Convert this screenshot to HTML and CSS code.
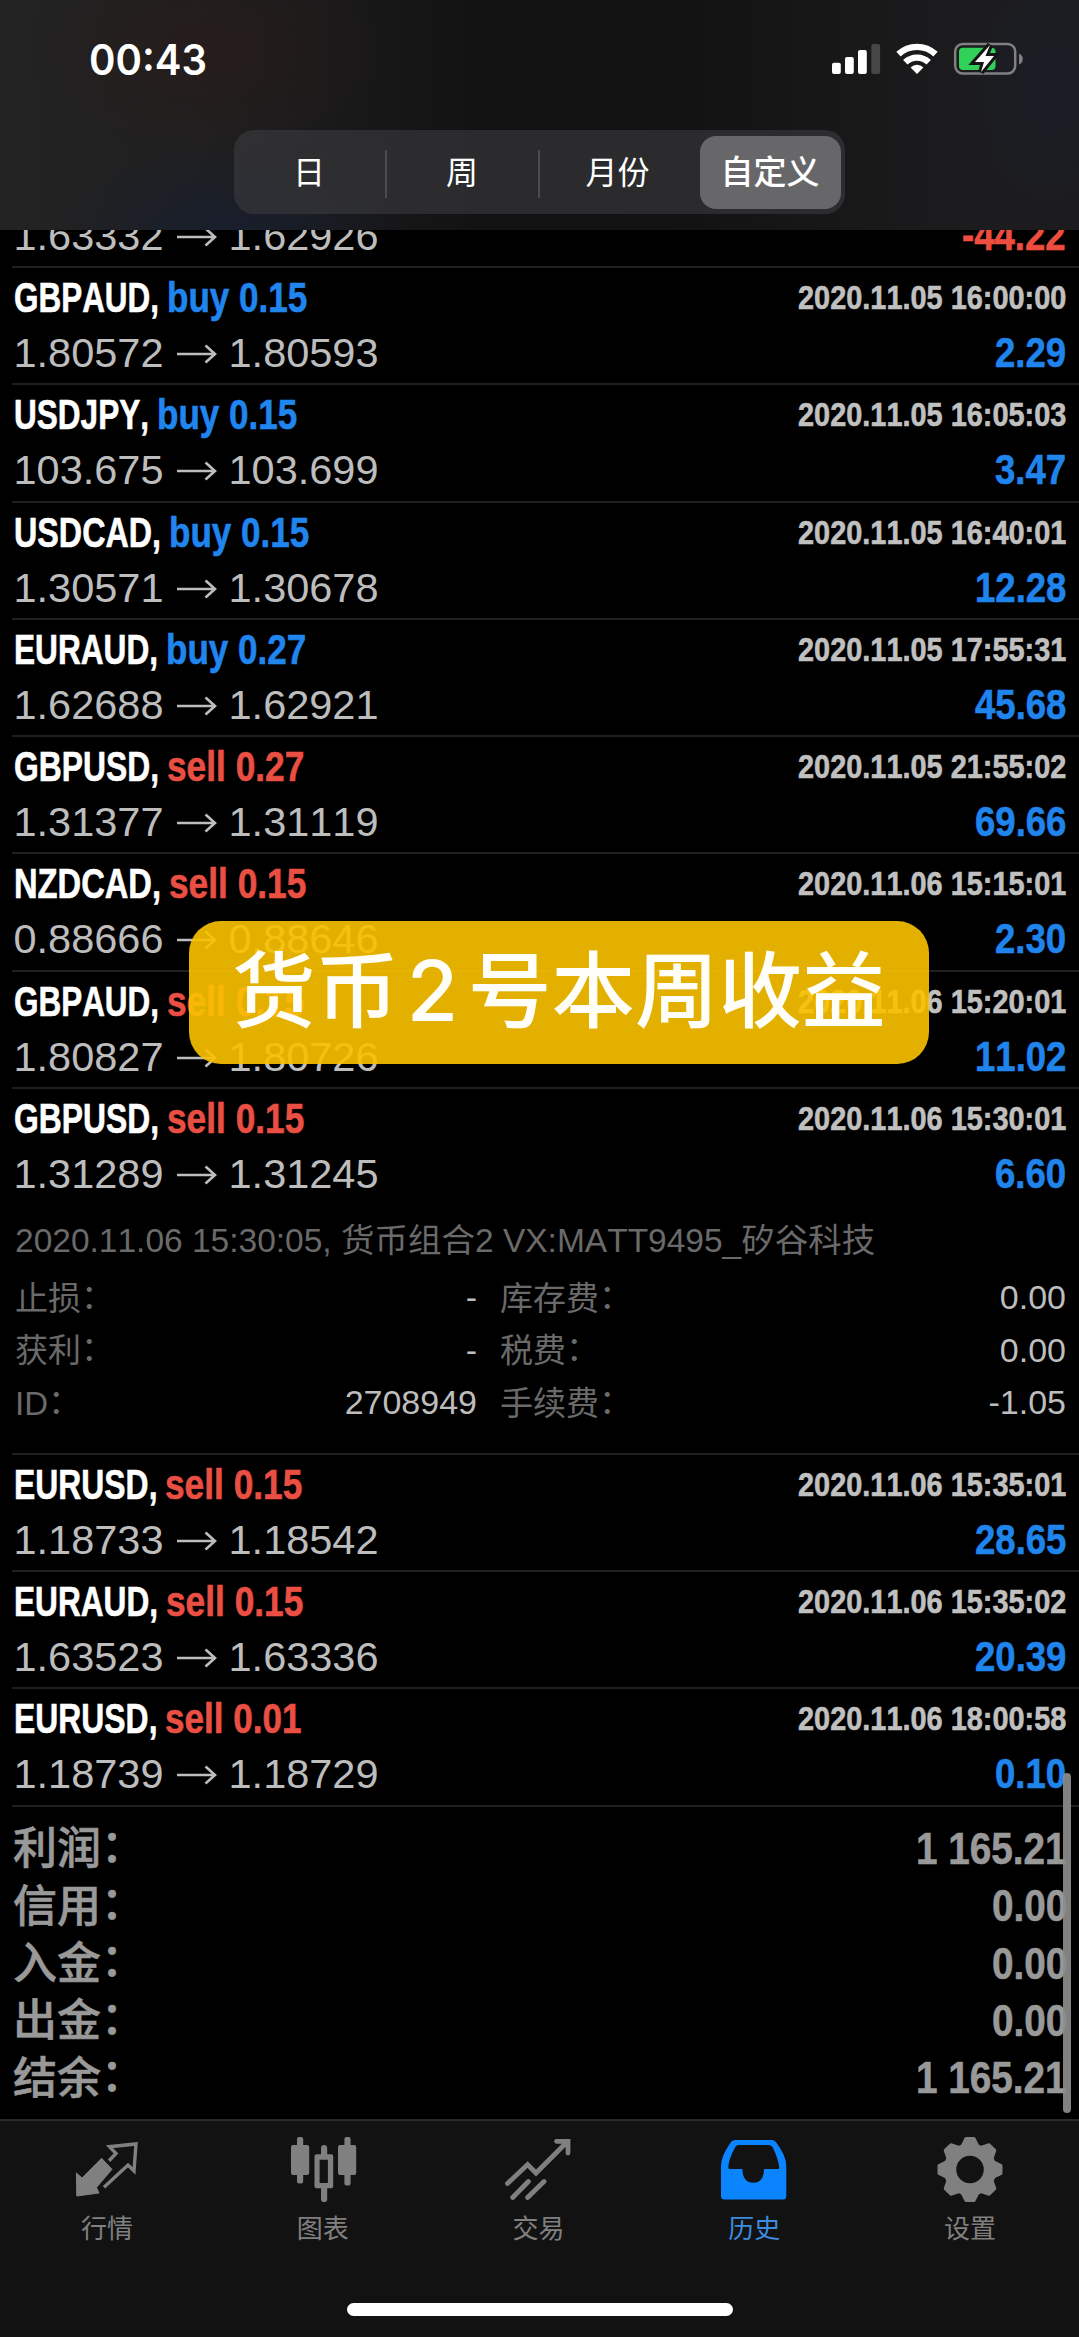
FILE: index.html
```html
<!DOCTYPE html>
<html lang="zh-CN">
<head>
<meta charset="utf-8">
<title>历史</title>
<link rel="stylesheet" href="styles.css">
</head>
<body>
<div class="screen">
  <header class="top">
    <div class="status">
      <div class="clock"><span data-fit="118">00:43</span></div>
      <svg class="status-icons" width="200" height="40" viewBox="828 38 200 40">
        <g fill="#fff">
          <rect x="832" y="62.7" width="8.8" height="11.3" rx="2"/>
          <rect x="845" y="57" width="8.8" height="17" rx="2"/>
          <rect x="858" y="50" width="8.8" height="24" rx="2"/>
          <rect x="871.3" y="44" width="8.8" height="30" rx="2" fill="#474747"/>
        </g>
        <g fill="none" stroke="#fff" stroke-width="6.4">
          <path d="M898.5 54.2a27 27 0 0 1 37 0"/>
          <path d="M905.3 62.3a17 17 0 0 1 23.4 0"/>
        </g>
        <path d="M917 74l-6.4-6.6a9.2 9.2 0 0 1 12.8 0z" fill="#fff"/>
        <rect x="955.2" y="44" width="60" height="29.6" rx="7.5" fill="none" stroke="#808082" stroke-width="2.5"/>
        <path d="M1019 53.5q3.8 1.5 3.8 5.5t-3.8 5.5z" fill="#808082"/>
        <rect x="959" y="47.7" width="36.5" height="22.3" rx="4" fill="#30d158"/>
        <path d="M990 45l-15 17h9l-3 10 13-16h-8.500z" fill="#fff" stroke="#151515" stroke-width="6" paint-order="stroke"/>
      </svg>
    </div>
    <nav class="segments">
      <span class="segment">日</span>
      <span class="segment">周</span>
      <span class="segment">月份</span>
      <span class="segment selected">自定义</span>
    </nav>
  </header>

  <main class="history">
    <section class="deals">
      <article class="deal">
        <div class="line"><b class="sym"></b></div>
        <div class="line"><span class="prices"><i>1.63332</i><svg class="arrow"><use href="#to"/></svg><i>1.62926</i></span><b class="profit loss"><span data-scale=".87">-44.22</span></b></div>
      </article>
      <article class="deal">
        <div class="line"><b class="sym"><span data-fit="145">GBPAUD,</span></b><b class="side buy"><span data-scale=".835">buy 0.15</span></b><b class="time"><span data-scale=".85">2020.11.05 16:00:00</span></b></div>
        <div class="line"><span class="prices"><i>1.80572</i><svg class="arrow"><use href="#to"/></svg><i>1.80593</i></span><b class="profit"><span data-scale=".87">2.29</span></b></div>
      </article>
      <article class="deal">
        <div class="line"><b class="sym"><span data-fit="135">USDJPY,</span></b><b class="side buy"><span data-scale=".835">buy 0.15</span></b><b class="time"><span data-scale=".85">2020.11.05 16:05:03</span></b></div>
        <div class="line"><span class="prices"><i>103.675</i><svg class="arrow"><use href="#to"/></svg><i>103.699</i></span><b class="profit"><span data-scale=".87">3.47</span></b></div>
      </article>
      <article class="deal">
        <div class="line"><b class="sym"><span data-fit="147">USDCAD,</span></b><b class="side buy"><span data-scale=".835">buy 0.15</span></b><b class="time"><span data-scale=".85">2020.11.05 16:40:01</span></b></div>
        <div class="line"><span class="prices"><i>1.30571</i><svg class="arrow"><use href="#to"/></svg><i>1.30678</i></span><b class="profit"><span data-scale=".87">12.28</span></b></div>
      </article>
      <article class="deal">
        <div class="line"><b class="sym"><span data-fit="144">EURAUD,</span></b><b class="side buy"><span data-scale=".835">buy 0.27</span></b><b class="time"><span data-scale=".85">2020.11.05 17:55:31</span></b></div>
        <div class="line"><span class="prices"><i>1.62688</i><svg class="arrow"><use href="#to"/></svg><i>1.62921</i></span><b class="profit"><span data-scale=".87">45.68</span></b></div>
      </article>
      <article class="deal">
        <div class="line"><b class="sym"><span data-fit="145">GBPUSD,</span></b><b class="side sell"><span data-scale=".84">sell 0.27</span></b><b class="time"><span data-scale=".85">2020.11.05 21:55:02</span></b></div>
        <div class="line"><span class="prices"><i>1.31377</i><svg class="arrow"><use href="#to"/></svg><i>1.31119</i></span><b class="profit"><span data-scale=".87">69.66</span></b></div>
      </article>
      <article class="deal">
        <div class="line"><b class="sym"><span data-fit="147">NZDCAD,</span></b><b class="side sell"><span data-scale=".84">sell 0.15</span></b><b class="time"><span data-scale=".85">2020.11.06 15:15:01</span></b></div>
        <div class="line"><span class="prices"><i>0.88666</i><svg class="arrow"><use href="#to"/></svg><i>0.88646</i></span><b class="profit"><span data-scale=".87">2.30</span></b></div>
      </article>
      <article class="deal">
        <div class="line"><b class="sym"><span data-fit="145">GBPAUD,</span></b><b class="side sell"><span data-scale=".84">sell 0.15</span></b><b class="time"><span data-scale=".85">2020.11.06 15:20:01</span></b></div>
        <div class="line"><span class="prices"><i>1.80827</i><svg class="arrow"><use href="#to"/></svg><i>1.80726</i></span><b class="profit"><span data-scale=".87">11.02</span></b></div>
      </article>
      <article class="deal open">
        <div class="line"><b class="sym"><span data-fit="145">GBPUSD,</span></b><b class="side sell"><span data-scale=".84">sell 0.15</span></b><b class="time"><span data-scale=".85">2020.11.06 15:30:01</span></b></div>
        <div class="line"><span class="prices"><i>1.31289</i><svg class="arrow"><use href="#to"/></svg><i>1.31245</i></span><b class="profit"><span data-scale=".87">6.60</span></b></div>
        <div class="details">
          <p class="comment">2020.11.06 15:30:05, 货币组合2 VX:MATT9495_矽谷科技</p>
          <dl class="fields">
            <dt>止损<span class="colon">：</span></dt><dd>-</dd><dt>库存费<span class="colon">：</span></dt><dd>0.00</dd>
            <dt>获利<span class="colon">：</span></dt><dd>-</dd><dt>税费<span class="colon">：</span></dt><dd>0.00</dd>
            <dt>ID<span class="colon">：</span></dt><dd>2708949</dd><dt>手续费<span class="colon">：</span></dt><dd>-1.05</dd>
          </dl>
        </div>
      </article>
      <article class="deal">
        <div class="line"><b class="sym"><span data-fit="143.500">EURUSD,</span></b><b class="side sell"><span data-scale=".84">sell 0.15</span></b><b class="time"><span data-scale=".85">2020.11.06 15:35:01</span></b></div>
        <div class="line"><span class="prices"><i>1.18733</i><svg class="arrow"><use href="#to"/></svg><i>1.18542</i></span><b class="profit"><span data-scale=".87">28.65</span></b></div>
      </article>
      <article class="deal">
        <div class="line"><b class="sym"><span data-fit="144">EURAUD,</span></b><b class="side sell"><span data-scale=".84">sell 0.15</span></b><b class="time"><span data-scale=".85">2020.11.06 15:35:02</span></b></div>
        <div class="line"><span class="prices"><i>1.63523</i><svg class="arrow"><use href="#to"/></svg><i>1.63336</i></span><b class="profit"><span data-scale=".87">20.39</span></b></div>
      </article>
      <article class="deal">
        <div class="line"><b class="sym"><span data-fit="143.500">EURUSD,</span></b><b class="side sell"><span data-scale=".835">sell 0.01</span></b><b class="time"><span data-scale=".85">2020.11.06 18:00:58</span></b></div>
        <div class="line"><span class="prices"><i>1.18739</i><svg class="arrow"><use href="#to"/></svg><i>1.18729</i></span><b class="profit"><span data-scale=".87">0.10</span></b></div>
      </article>
    </section>
    <section class="totals">
      <div class="total"><span class="label">利润<span class="colon">：</span></span><b><span data-scale=".86">1 165.21</span></b></div>
      <div class="total"><span class="label">信用<span class="colon">：</span></span><b><span data-scale=".86">0.00</span></b></div>
      <div class="total"><span class="label">入金<span class="colon">：</span></span><b><span data-scale=".86">0.00</span></b></div>
      <div class="total"><span class="label">出金<span class="colon">：</span></span><b><span data-scale=".86">0.00</span></b></div>
      <div class="total"><span class="label">结余<span class="colon">：</span></span><b><span data-scale=".86">1 165.21</span></b></div>
    </section>
    <div class="scrollbar"></div>
  </main>

  <footer class="bottom">
    <nav class="tabs">
      <a class="tab">
        <svg viewBox="0 0 80 76"><path d="M41 30.700L48 23.500L41.500 16.700L68 14L66 41L60 35L36 57.300" fill="none" stroke="currentColor" stroke-width="3.400"/><path d="M33.600 28.300L44 39.300L28.500 57.500L31 63L8.800 66L8.400 43L14 48z" fill="currentColor" stroke="currentColor" stroke-linejoin="round"/></svg>
        <span>行情</span>
      </a>
      <a class="tab">
        <svg viewBox="0 0 80 76"><g fill="currentColor"><rect x="13" y="7" width="6.200" height="46.500" rx="2"/><rect x="7" y="15" width="18.200" height="30" rx="2"/><rect x="60.400" y="7" width="6.200" height="48.500" rx="2"/><rect x="54" y="15" width="18.200" height="30" rx="2"/><path d="M37 18a2 2 0 0 1 6.200 0v6.300h4a2 2 0 0 1 2 2v30a2 2 0 0 1-2 2h-4v10.700a2 2 0 0 1-6.200 0V58.300h-4.500a2 2 0 0 1-2-2v-30a2 2 0 0 1 2-2H37zM35.600 29.700V53h8.300V29.700z" fill-rule="evenodd"/></g></svg>
        <span>图表</span>
      </a>
      <a class="tab">
        <svg viewBox="0 0 80 76"><path d="M8.500 53.500L28.600 34.500L37 43L68 12M57.500 11.300H69V23M13.700 67.500L29.400 51.500M28.600 67.500L45 51.500" fill="none" stroke="currentColor" stroke-width="4.800" stroke-linecap="round" stroke-linejoin="miter"/></svg>
        <span>交易</span>
      </a>
      <a class="tab active">
        <svg viewBox="0 0 80 76"><path d="M20 10H57Q60 10 61.300 12.500Q71.300 26 71.300 36V66Q71.300 69.500 68 69.500H9.500Q6 69.500 6 66V36Q6 26 15.700 12.500Q17 10 20 10zM23.500 15Q21 15 20 17.500Q13.300 30 13.300 37.500Q13.300 39 15 39H27.500V41Q28.500 52.700 38.300 52.700Q48 52.700 49 41V39H63Q64.500 39 64.300 37.500Q63 28 57.800 17.500Q56.600 15 54 15z" fill="currentColor" fill-rule="evenodd"/></svg>
        <span>历史</span>
      </a>
      <a class="tab">
        <svg viewBox="0 0 80 76"><defs><path id="tooth" d="M-7.500 -24L-4 -31H4L7.500 -24z"/></defs><g transform="translate(39 39.500)" fill="currentColor" stroke="currentColor"><circle r="20" fill="none" stroke-width="12.500"/><g stroke-width="3" stroke-linejoin="round"><use href="#tooth"/><use href="#tooth" transform="rotate(45)"/><use href="#tooth" transform="rotate(90)"/><use href="#tooth" transform="rotate(135)"/><use href="#tooth" transform="rotate(180)"/><use href="#tooth" transform="rotate(225)"/><use href="#tooth" transform="rotate(270)"/><use href="#tooth" transform="rotate(315)"/></g></g></svg>
        <span>设置</span>
      </a>
    </nav>
    <div class="home-bar"></div>
  </footer>

  <div class="banner">货币<span class="num">2</span>号本周收益</div>
</div>

<svg width="0" height="0" class="defs"><symbol id="to" viewBox="0 0 42 24"><path d="M1 12H39M29.500 3.500L39 12L29.500 20.500" fill="none" stroke="currentColor" stroke-width="2.600"/></symbol></svg>
<script src="fit.js"></script>
</body>
</html>
```
FILE: styles.css
```css
* { box-sizing: border-box; }

body {
  margin: 0;
  background: #000;
  font-family: "Liberation Sans", "Noto Sans CJK SC", sans-serif;
  font-kerning: none;
}

.screen {
  position: relative;
  display: flex;
  flex-direction: column;
  width: 1079px;
  height: 2337px;
  overflow: hidden;
}

.defs { position: absolute; }

[data-fit], [data-scale] {
  display: inline-block;
  white-space: pre;
  transform-origin: 0 0;
}

.top {
  flex: none;
  height: 230px;
  background:
    radial-gradient(ellipse 180px 90px at 230px 235px, rgba(22, 30, 48, .8), transparent),
    radial-gradient(ellipse 190px 110px at 210px 50px, rgba(42, 26, 24, .6), transparent),
    radial-gradient(ellipse 90px 130px at 1050px 90px, rgba(24, 29, 42, .6), transparent),
    linear-gradient(90deg, #232323, #1f1f20 20%, #121213 45%, #131314 65%, #1c1c1e 90%, #1c1c1f);
}

.status {
  display: flex;
  justify-content: space-between;
  height: 130px;
  padding: 38px 51px 0 89px;
}

.clock {
  height: 44px;
  font: 600 42px/44px Inter, "Liberation Sans", sans-serif;
  color: #fff;
}

.segments {
  display: flex;
  width: 611px;
  height: 84px;
  margin-left: 234px;
  padding: 5.500px 4px 5.500px 0;
  border-radius: 20px;
  background: rgba(60, 60, 64, .6);
}

.segment {
  display: flex;
  align-items: center;
  justify-content: center;
  width: 153px;
  padding: 2px 3px 0 0;
  font-size: 32px;
  line-height: 40px;
  color: #fff;
  background: linear-gradient(#4c4c4f, #4c4c4f) right 14px / 2px 48px no-repeat;
}
.segment:nth-child(3) { background: none; width: 160px; padding-right: 5px; }
.segment.selected {
  width: 141px;
  padding-right: 1px;
  border-radius: 16px;
  background: #67676a;
  font-size: 33px;
  font-weight: 500;
}

.history {
  position: relative;
  flex: none;
  height: 1889px;
  overflow: hidden;
}

.deals { margin: -79.300px 0 0 12px; }

.deal {
  height: 117.300px;
  padding: 0 13px 0 0;
  border-bottom: 2px solid #202021;
}
.deal.open { height: 365.800px; }

.line {
  display: flex;
  height: 60px;
  padding-left: 1.500px;
  font-size: 42px;
  line-height: 60px;
}
.line + .line { height: 50px; line-height: 50px; }
.sym, .side, .time, .profit, .total { -webkit-text-stroke: .6px currentColor; }

.sym { color: #fff; }
.side { margin-left: 8px; }
.buy { color: #2085ee; }
.sell { color: #e94f43; }

.time {
  margin-left: auto;
  font-size: 34px;
  line-height: 59px;
  color: #c0c0c0;
}

.prices {
  display: flex;
  align-items: center;
  color: #bdbdbd;
}
.prices i { font-style: normal; font-size: 41.500px; }
.arrow { width: 42px; height: 24px; margin: 2px 11px 0 12px; }

.profit { margin-left: auto; color: #1f84ec; }
.profit.loss { color: #ee4e40; }

.details {
  font-size: 33px;
  color: #6a6a6a;
}
.comment {
  margin: 0;
  padding: 13px 0 0 3px;
  height: 72px;
  font-size: 33.500px;
  line-height: 58px;
  white-space: nowrap;
}
.fields {
  display: grid;
  grid-template-columns: 186px 276px 202px 1fr;
  grid-auto-rows: 52.500px;
  margin: 0 0 0 3px;
  line-height: 52.500px;
}
.fields dt { padding-top: 1.500px; white-space: nowrap; }
.fields dd { margin: 0; text-align: right; font-size: 34px; color: #bdbdbd; }
.fields dt:nth-of-type(even) { padding-left: 23px; }

.colon {
  position: relative;
  top: -.06em;
  line-height: 1;
}

.totals {
  padding: 12px 12px 0 13px;
  color: #999;
}
.total {
  display: flex;
  justify-content: space-between;
  height: 57.400px;
  font-size: 44px;
  font-weight: 500;
  line-height: 57.400px;
}
.total .label { padding-top: 1.500px; }
.total b { padding-top: 1px; font-size: 45px; }

.scrollbar {
  position: absolute;
  right: 8px;
  top: 1543px;
  width: 8px;
  height: 340px;
  border-radius: 4px;
  background: rgba(140, 140, 140, .92);
}

.bottom {
  flex: 1;
  border-top: 2px solid #2a2a2a;
  background: #121212;
}
.tabs { display: grid; grid-template-columns: repeat(5, 1fr); height: 182px; }
.tab {
  display: flex;
  flex-direction: column;
  align-items: center;
  padding-top: 9px;
  font-size: 26px;
  line-height: 40px;
  color: #808080;
}
.tab svg { width: 80px; height: 76px; margin-bottom: 3px; }
.tab span { margin-right: 2px; }
.tab.active { color: #0a84ff; }
.tab.active span { color: #3b8bdf; }

.home-bar {
  width: 386px;
  height: 13px;
  margin: 0 auto;
  border-radius: 7px;
  background: #fff;
}

/* caption laid over the list */
.banner {
  position: absolute;
  left: 189px;
  top: 921px;
  width: 740px;
  height: 143px;
  padding-left: 43px;
  border-radius: 32px;
  background: rgba(251, 193, 0, .91);
  color: #fffef8;
  font-size: 83.500px;
  font-weight: 500;
  line-height: 140px;
  white-space: nowrap;
}
.banner .num { display: inline-block; width: 69px; padding-right: 2px; text-align: center; font-family: Inter, sans-serif; }
```
FILE: fit.js
```js
// Condenses text horizontally: data-fit is a width in px, data-scale a ratio.
document.querySelectorAll('[data-fit], [data-scale]').forEach(function (el) {
  var natural = el.getBoundingClientRect().width;
  var ratio = el.dataset.fit ? el.dataset.fit / natural : +el.dataset.scale;
  el.style.transform = 'scaleX(' + ratio + ')';
  el.style.marginRight = natural * (ratio - 1) + 'px';
});
```
